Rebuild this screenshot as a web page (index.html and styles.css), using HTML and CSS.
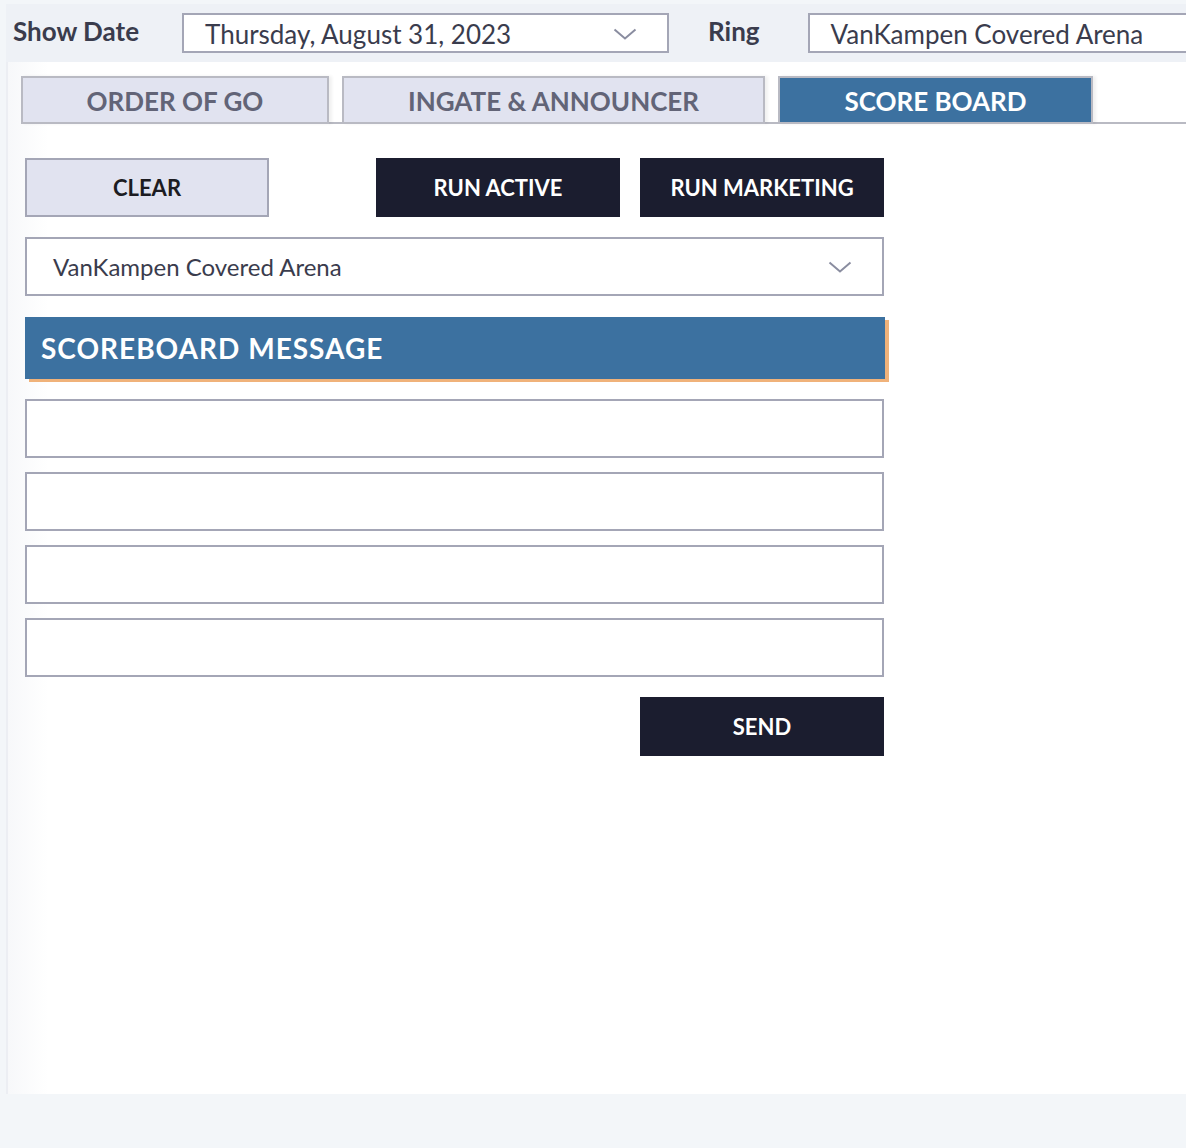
FILE: index.html
```html
<!DOCTYPE html>
<html>
<head>
<meta charset="utf-8">
<link rel="stylesheet" href="styles.css">
</head>
<body>
<div class="topbar">
  <label class="top-label">Show Date</label>
  <div class="top-select date-select">
    <span>Thursday, August 31, 2023</span>
    <svg class="chev" width="24" height="12" viewBox="0 0 24 12"><polyline points="1.5,1.5 12,10.5 22.5,1.5" fill="none" stroke="#8a8da0" stroke-width="2"/></svg>
  </div>
  <label class="top-label ring-label">Ring</label>
  <div class="top-select ring-select">
    <span>VanKampen Covered Arena</span>
  </div>
</div>
<div class="panel">
  <div class="tabs">
    <div class="tab tab-order">ORDER OF GO</div>
    <div class="tab tab-ingate">INGATE &amp; ANNOUNCER</div>
    <div class="tab tab-score active">SCORE BOARD</div>
  </div>
  <div class="content">
    <div class="btn-row">
      <button class="btn btn-light">CLEAR</button>
      <button class="btn btn-dark btn-active">RUN ACTIVE</button>
      <button class="btn btn-dark">RUN MARKETING</button>
    </div>
    <div class="select">
      <span>VanKampen Covered Arena</span>
      <svg class="chev" width="24" height="12" viewBox="0 0 24 12"><polyline points="1.5,1.5 12,10.5 22.5,1.5" fill="none" stroke="#8a8da0" stroke-width="2"/></svg>
    </div>
    <div class="section-head">SCOREBOARD MESSAGE</div>
    <div class="inputs">
      <input class="msg" type="text">
      <input class="msg" type="text">
      <input class="msg" type="text">
      <input class="msg" type="text">
    </div>
    <div class="send-row">
      <button class="btn btn-dark">SEND</button>
    </div>
  </div>
</div>
</body>
</html>
```
FILE: styles.css
```css
* { box-sizing: border-box; }
html, body {
  margin: 0;
  padding: 0;
  background: #f3f6f9;
  font-family: Lato, "Open Sans", sans-serif;
  overflow: hidden;
}
body {
  width: 1186px;
  height: 1148px;
}
.topbar {
  margin-top: 4px;
  margin-left: 6px;
  height: 58px;
  background: #eef1f6;
  display: flex;
  align-items: center;
  padding-left: 7px;
  white-space: nowrap;
}
.top-label {
  font-weight: 700;
  font-size: 26px;
  color: #3a3c4d;
  position: relative;
  top: -2px;
}
.top-select {
  height: 40px;
  background: #fff;
  border: 2px solid #a4a6b6;
  display: flex;
  align-items: center;
  justify-content: space-between;
  padding-left: 21px;
  padding-right: 30px;
  padding-top: 1px;
  font-size: 26px;
  color: #3a3c4d;
  flex-shrink: 0;
}
.date-select { width: 487px; margin-left: 43px; }
.ring-label { margin-left: 39px; }
.ring-select { width: 400px; margin-left: 48px; }
.panel {
  margin-left: 6px;
  height: 1032px;
  border-left: 2px solid #eceef3;
  background: linear-gradient(to right, #f7f8fa 0px, #fff 40px);
  padding: 14px 0 0 13px;
}
.tabs {
  display: flex;
  gap: 13px;
  border-bottom: 2px solid #b9bac3;
  height: 48px;
}
.tab {
  height: 48px;
  border: 2px solid #b9bac3;
  background: #e1e3f0;
  color: #626477;
  font-size: 26px;
  font-weight: 700;
  display: flex;
  align-items: center;
  justify-content: center;
  padding-top: 2px;
  box-shadow: 3px 0 3px rgba(0,0,0,0.06);
  flex-shrink: 0;
}
.tab-order { width: 308px; }
.tab-ingate { width: 423px; }
.tab-score { width: 315px; }
.tab.active { background: #3c71a0; color: #fff; }
.content {
  width: 863px;
  padding: 34px 0 0 4px;
}
.btn {
  height: 59px;
  width: 244px;
  font-family: Lato, "Open Sans", sans-serif;
  font-size: 22px;
  font-weight: 700;
  border: none;
  padding: 0;
  cursor: pointer;
}
.btn-light {
  background: #e1e3f0;
  border: 2px solid #a4a6b6;
  color: #1c1c22;
}
.btn-dark {
  background: #1b1d2f;
  color: #fff;
}
.btn-row {
  display: flex;
  gap: 20px;
}
.btn-active { margin-left: auto; }
.select {
  margin-top: 20px;
  height: 59px;
  border: 2px solid #a4a6b6;
  background: #fff;
  display: flex;
  align-items: center;
  justify-content: space-between;
  padding-left: 26px;
  padding-right: 30px;
  font-size: 24px;
  color: #3a3c4d;
}
.section-head {
  margin-top: 21px;
  height: 62px;
  background: #3c71a0;
  color: #fff;
  font-size: 28px;
  font-weight: 700;
  letter-spacing: 1px;
  display: flex;
  align-items: center;
  padding-left: 16px;
  box-shadow: 4px 3px 0 #f0b27a;
  width: 860px;
}
.inputs {
  margin-top: 20px;
  display: flex;
  flex-direction: column;
  gap: 14px;
}
.msg {
  height: 59px;
  width: 100%;
  border: 2px solid #a4a6b6;
  background: #fff;
  font-family: Lato, sans-serif;
  font-size: 20px;
  padding: 0 16px;
  outline: none;
  margin: 0;
  display: block;
}
.send-row {
  margin-top: 20px;
  display: flex;
  justify-content: flex-end;
}
```
